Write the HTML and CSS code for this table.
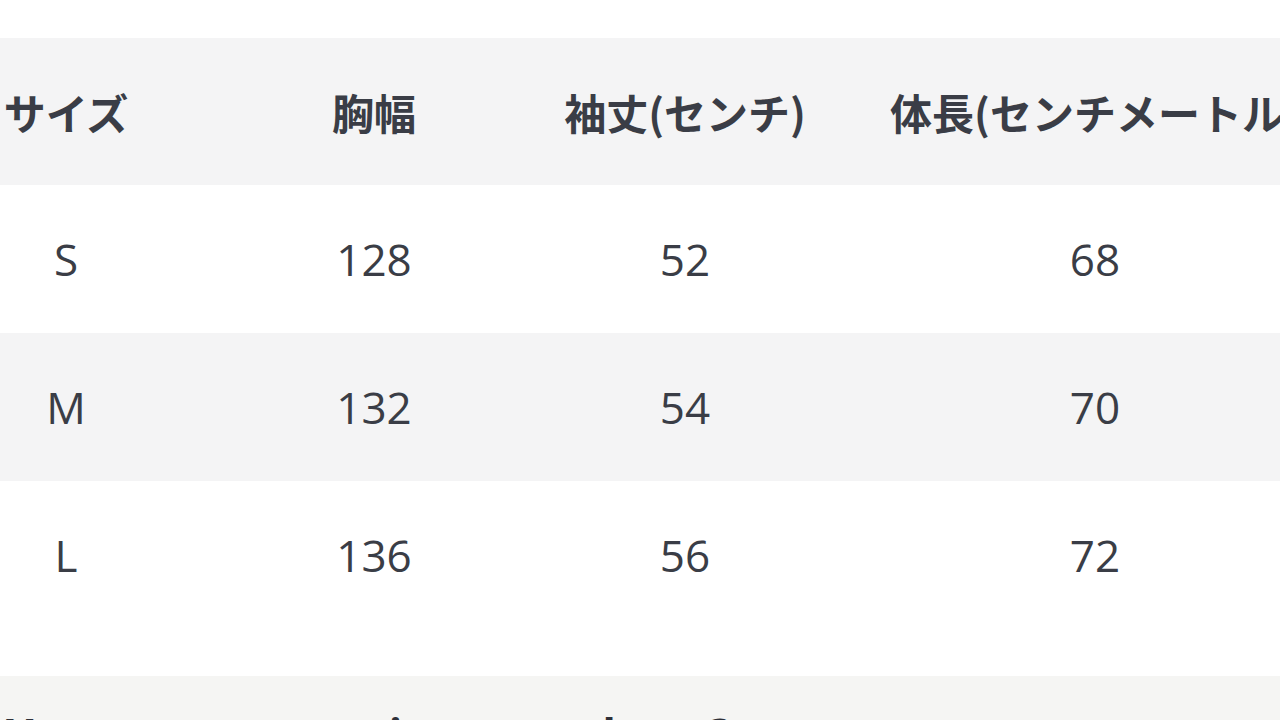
FILE: index.html
```html
<!DOCTYPE html>
<html lang="ja">
<head>
<meta charset="utf-8">
<title>サイズ表</title>
<link rel="stylesheet" href="styles.css">
</head>
<body>
<div class="page">
  <div class="size-table">
    <div class="row head">
      <div class="cell"><span>サイズ</span></div>
      <div class="cell"><span>胸幅</span></div>
      <div class="cell"><span>袖丈(センチ)</span></div>
      <div class="cell"><span>体長(センチメートル)</span></div>
    </div>
    <div class="row">
      <div class="cell"><span>S</span></div>
      <div class="cell"><span>128</span></div>
      <div class="cell"><span>52</span></div>
      <div class="cell"><span>68</span></div>
    </div>
    <div class="row alt">
      <div class="cell"><span>M</span></div>
      <div class="cell"><span>132</span></div>
      <div class="cell"><span>54</span></div>
      <div class="cell"><span>70</span></div>
    </div>
    <div class="row">
      <div class="cell"><span>L</span></div>
      <div class="cell"><span>136</span></div>
      <div class="cell"><span>56</span></div>
      <div class="cell"><span>72</span></div>
    </div>
  </div>
  <section class="next">
    <h2 class="next-title">You may wear a size up or down?</h2>
  </section>
</div>
</body>
</html>
```
FILE: styles.css
```css
html, body {
  margin: 0;
  padding: 0;
  background: #ffffff;
}
body {
  width: 1280px;
  height: 720px;
  overflow: hidden;
  font-family: "Open Sans", "Noto Sans CJK JP", sans-serif;
  color: #3a3d46;
}
.page {
  padding-top: 38px;
}
.size-table {
  display: flex;
  flex-direction: column;
}
.row {
  display: grid;
  grid-template-columns: 132px 484px 138px 682px;
  height: 148px;
  font-size: 44px;
  line-height: 1;
}
.row.head {
  height: 147px;
  background: #f4f4f5;
  font-family: "Noto Sans CJK JP", sans-serif;
  font-weight: 700;
  font-size: 42px;
}
.row.alt {
  background: #f4f4f5;
}
.cell {
  display: flex;
  align-items: center;
  justify-content: center;
  white-space: nowrap;
  min-width: 0;
}
.cell span {
  flex: none;
}
.next {
  margin-top: 47px;
  background: #f5f5f3;
  padding: 25px 0 40px 6px;
}
.next-title {
  margin: 0;
  font-size: 44px;
  font-weight: 700;
  line-height: 1.5;
  color: #2e3038;
  font-family: "Open Sans", sans-serif;
}
```
